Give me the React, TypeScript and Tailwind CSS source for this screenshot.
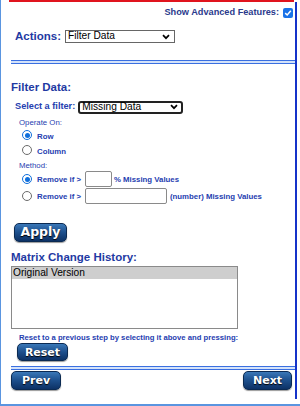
import { useState } from "react";

const btn =
    "rounded-[5px] border border-[#0b2a52] bg-gradient-to-b from-[#3a78b8] via-[#1d4f8c] to-[#0d3266] text-white font-bold [text-shadow:0_1px_1px_#000] shadow-[0_1px_1px_rgba(0,0,0,0.4)] flex items-center justify-center leading-none font-['DejaVu_Sans',Verdana,sans-serif]";

function Chevron() {
    return (
        <svg width="8" height="6" viewBox="0 0 8 6" className="shrink-0">
            <path d="M1 1.2 L4 4.2 L7 1.2" fill="none" stroke="#000" strokeWidth="1.7" />
        </svg>
    );
}

function Radio({ on }: { on: boolean }) {
    return (
        <span className={`w-[10px] h-[10px] rounded-full border shrink-0 flex items-center justify-center bg-white ${on ? "border-[#0f6fdc]" : "border-[#6b6b6b]"}`}>
            {on && <span className="w-[5px] h-[5px] rounded-full bg-[#0f6fdc]" />}
        </span>
    );
}

function Rule({ top }: { top: string }) {
    return <div className={`${top} h-[4px] border-t border-b border-[#3a6fe0] bg-[#d3e2fa]`} />;
}

export default function App() {
    const [op, setOp] = useState("row");
    const [method, setMethod] = useState("pct");

    return (
        <div className="w-[300px] h-[406px] bg-white overflow-hidden border-l border-b-2 border-[#5a95e0] font-['Liberation_Sans',Arial,sans-serif]">
            <div className="ml-[8px] mr-[6px] h-[2px] bg-[#e0141e]" />
            <div className="h-[397px] mr-[3px] border-r-2 border-[#1533c9] pl-[10px] flex flex-col">
                {/* advanced toggle */}
                <div className="h-[10px] flex justify-end items-center gap-[4px] mt-[6px] pr-[2px] leading-none">
                    <span className="text-[9.2px] font-bold text-[#2a3a8c]">Show Advanced Features:</span>
                    <span className="w-[10px] h-[10px] rounded-[2px] bg-[#1a73e8] flex items-center justify-center">
                        <svg width="8" height="8" viewBox="0 0 8 8">
                            <path d="M1.2 4.1 L3.2 6 L6.8 1.8" fill="none" stroke="#fff" strokeWidth="1.5" />
                        </svg>
                    </span>
                </div>

                <div className="h-[13px] flex items-center gap-[4px] pl-[4px] mt-[12px] leading-none">
                    <span className="text-[11.5px] font-bold text-[#1f3aa3]">Actions:</span>
                    <div className="w-[110px] h-[13px] border border-[#666] bg-white flex items-center justify-between pl-[2px] pr-[4px] text-[10.2px] text-black">
                        <span>Filter Data</span>
                        <Chevron />
                    </div>
                </div>

                <Rule top="mt-[17px]" />

                <div className="mt-[18px] text-[11.5px] font-bold text-[#1f3aa3] leading-none">Filter Data:</div>

                <div className="h-[13px] flex items-center gap-[3px] pl-[4px] mt-[7px] leading-none">
                    <span className="text-[9.2px] font-bold text-[#2540b0]">Select a filter:</span>
                    <div className="w-[105px] h-[13px] border-2 border-[#222] rounded-[3px] bg-white flex items-center justify-between pl-[2px] pr-[3px] text-[10.2px] text-black">
                        <span>Missing Data</span>
                        <Chevron />
                    </div>
                </div>

                <div className="pl-[8px] mt-[5px] text-[7.8px] text-[#2540b0] leading-none">
                    <div>Operate On:</div>
                    <div className="flex flex-col gap-[5px] mt-[4px] pl-[3px] font-bold">
                        <label className="h-[10px] flex items-center" onClick={() => setOp("row")}>
                            <Radio on={op === "row"} />
                            <span className="ml-[5px] mt-[4px]">Row</span>
                        </label>
                        <label className="h-[10px] flex items-center" onClick={() => setOp("col")}>
                            <Radio on={op === "col"} />
                            <span className="ml-[5px] mt-[4px]">Column</span>
                        </label>
                    </div>

                    <div className="mt-[7px]">Method:</div>
                    <div className="flex flex-col gap-[1px] mt-[1px] pl-[3px] font-bold">
                        <label className="h-[16px] flex items-center" onClick={() => setMethod("pct")}>
                            <Radio on={method === "pct"} />
                            <span className="ml-[5px] w-[48px] whitespace-nowrap mt-[1px]">Remove if &gt;</span>
                            <span className="w-[27px] h-[16px] border border-[#8a8a8a] rounded-[2px] bg-white" />
                            <span className="ml-[2px] whitespace-nowrap mt-[1px]">% Missing Values</span>
                        </label>
                        <label className="h-[16px] flex items-center" onClick={() => setMethod("num")}>
                            <Radio on={method === "num"} />
                            <span className="ml-[5px] w-[48px] whitespace-nowrap mt-[1px]">Remove if &gt;</span>
                            <span className="w-[82px] h-[16px] border border-[#8a8a8a] rounded-[2px] bg-white" />
                            <span className="ml-[3px] whitespace-nowrap mt-[1px]">(number) Missing Values</span>
                        </label>
                    </div>
                </div>

                <button className={`${btn} ml-[3px] mt-[19px] w-[53px] h-[19px] text-[12.5px]`}>Apply</button>

                <div className="mt-[10px] text-[11.5px] font-bold text-[#1f3aa3] leading-none">Matrix Change History:</div>
                <div className="mt-[2px] w-[227px] h-[63px] border border-[#8a8a8a] bg-white">
                    <div className="bg-[#cecece] text-[10.2px] text-black leading-[12px] pl-[1px]">Original Version</div>
                </div>

                <div className="pl-[8px] mt-[5px] text-[7.7px] font-bold text-[#2540b0] leading-none whitespace-nowrap">Reset to a previous step by selecting it above and pressing:</div>
                <button className={`${btn} ml-[6px] mt-[2px] w-[51px] h-[18px] text-[11px]`}>Reset</button>

                <Rule top="mt-[5px]" />

                <div className="flex justify-between mt-[1px] pr-[3px]">
                    <button className={`${btn} w-[50px] h-[19px] text-[11px]`}>Prev</button>
                    <button className={`${btn} w-[49px] h-[19px] text-[11px]`}>Next</button>
                </div>
            </div>
        </div>
    );
}
